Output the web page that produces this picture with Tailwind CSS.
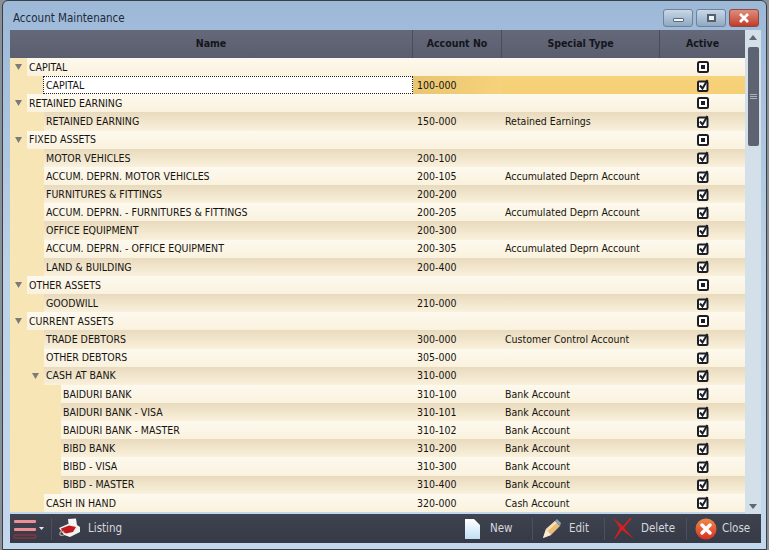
<!DOCTYPE html>
<html lang="en">
<head>
  <meta charset="UTF-8">
  <title>Account Maintenance</title>
  <script src="https://cdn.jsdelivr.net/npm/@tailwindcss/browser@4"></script>
</head>
<body class="w-[769px] h-[550px] overflow-hidden bg-[#8a8f96] font-['DejaVu_Sans_Condensed','DejaVu_Sans',sans-serif]">
  <div class="h-[550px] mx-[2px] pt-[1px] pb-[1px] flex flex-col rounded-t-[6px] border border-[#3a3f46] bg-gradient-to-b from-[#9db9d8] via-[#bcd2e8] to-[#c3d8ec]">
    <!-- title bar -->
    <div class="h-[28px] shrink-0 flex items-center justify-between pt-[4px] pl-[10px] pr-[7px]">
      <span class="text-[11.5px] text-[#1d2a3a] pt-[2px]">Account Maintenance</span>
      <div class="flex gap-[3px]">
        <button class="w-[30px] h-[18px] rounded-[3px] border border-[#6f8298] bg-gradient-to-b from-[#c8d8e8] to-[#8fa8c2] flex items-center justify-center">
          <span class="w-[11px] h-[4px] bg-[#f1f5f9] border border-[#5a6a7a] rounded-[1px] mt-[3px]"></span>
        </button>
        <button class="w-[30px] h-[18px] rounded-[3px] border border-[#6f8298] bg-gradient-to-b from-[#c8d8e8] to-[#8fa8c2] flex items-center justify-center">
          <span class="w-[9px] h-[8px] bg-[#f1f5f9] border-2 border-[#56606c]"></span>
        </button>
        <button class="w-[30px] h-[18px] rounded-[3px] border border-[#8a4a40] bg-gradient-to-b from-[#e08c7c] to-[#bf3a2a] flex items-center justify-center">
          <svg width="12" height="10" viewBox="0 0 12 10"><path d="M2 1l8 8M10 1l-8 8" stroke="#fff" stroke-width="2.6"/></svg>
        </button>
      </div>
    </div>

    <div class="ml-[7px] mr-[5px] flex-1 flex flex-col min-h-0">
      <div class="flex flex-1 min-h-0">
        <div class="w-[735px] shrink-0">
          <!-- header -->
          <div class="h-[28px] flex bg-gradient-to-b from-[#646878] to-[#5a5e6e] text-[10.5px] font-bold text-[#14161c]">
            <div class="w-[403px] flex items-center justify-center border-r border-[#494d5a]">Name</div>
            <div class="w-[89px] flex items-center justify-center border-r border-[#494d5a]">Account No</div>
            <div class="w-[158px] flex items-center justify-center border-r border-[#494d5a]">Special Type</div>
            <div class="flex-1 flex items-center justify-center">Active</div>
          </div>
          <div id="rows" class="bg-[#f8e5b6]"></div>
        </div>
        <!-- scrollbar -->
        <div class="w-[16px] bg-[#d3dfe9] flex flex-col items-center">
          <svg class="mt-[5px] shrink-0" width="8" height="5" viewBox="0 0 8 5"><path d="M4 0l4 5H0z" fill="#5e6672"/></svg>
          <div class="mt-[7px] w-[11px] h-[99px] rounded-[2px] bg-[#5e6372] flex flex-col items-center justify-center gap-[1px]">
            <span class="w-[7px] h-[1px] bg-[#aab0bc]"></span>
            <span class="w-[7px] h-[1px] bg-[#aab0bc]"></span>
            <span class="w-[7px] h-[1px] bg-[#aab0bc]"></span>
          </div>
          <svg class="mt-auto mb-[5px] shrink-0" width="8" height="5" viewBox="0 0 8 5"><path d="M4 5l4-5H0z" fill="#5e6672"/></svg>
        </div>
      </div>

      <!-- toolbar -->
      <div class="h-[29px] shrink-0 mb-[5px] bg-gradient-to-b from-[#3f4350] to-[#363a46] flex items-center text-[11.5px] text-[#d5d8de]">
        <div class="w-[42px] pl-[3px] flex items-center gap-[2px] border-r border-[#4d515e] h-[22px]">
          <svg width="24" height="20" viewBox="0 0 24 20">
            <rect x="1" y="1" width="22" height="3" rx="1" fill="#ef8d94"/>
            <rect x="1" y="9" width="22" height="3" rx="1" fill="#ef8d94"/>
            <rect x="1" y="16" width="22" height="3" rx="1" fill="none" stroke="#a8343c"/>
          </svg>
          <svg width="5" height="3" viewBox="0 0 5 3"><path d="M0 0h5L2.500 3z" fill="#e5e7eb"/></svg>
        </div>
        <div class="flex items-center ml-[6px] gap-[7px]">
          <svg width="23" height="22" viewBox="0 0 23 22">
            <path d="M10 1l8-.5 1 7-8 3z" fill="#f6f6f6"/>
            <path d="M1 10l9-4 9 1 3 2v5l-10 5-6-2z" fill="#f2f2f2"/>
            <path d="M3 10.500l8-3 7 1.500-3 5-7 1.500-4-2z" fill="#c21a1a"/>
            <path d="M6 17c-3 1-5 0-4-2s3-2 4-1" fill="none" stroke="#b9a0a0" stroke-width="1.200"/>
          </svg>
          <span>Listing</span>
        </div>
        <div class="ml-auto flex items-center h-[22px]">
          <div class="w-[73px] pl-[5px] flex items-center border-r border-[#4d515e] h-full">
            <span class="w-[25px]">
              <svg width="15" height="20" viewBox="0 0 15 20"><defs><linearGradient id="pg" x1="0" y1="0" x2="0" y2="1"><stop offset="0" stop-color="#fff"/><stop offset="1" stop-color="#bfe0f4"/></linearGradient></defs><path d="M0 0h9l6 6v14H0z" fill="url(#pg)"/></svg>
            </span>
            <span>New</span>
          </div>
          <div class="w-[72px] pl-[8px] flex items-center border-r border-[#4d515e] h-full">
            <span class="w-[28px]">
              <svg width="20" height="20" viewBox="0 0 20 20">
                <path d="M5 10L14 2l5 5-9 9-8 3z" fill="#e8bd78"/>
                <path d="M5 10l5 6-8 3z" fill="#f7ecd8"/>
                <path d="M5 10l9-8 2 2-9 8z" fill="#f6dfae"/>
                <path d="M14 2l2-2 4 4-1 3z" fill="#8aa0b8"/>
              </svg>
            </span>
            <span>Edit</span>
          </div>
          <div class="w-[82px] pl-[7px] flex items-center border-r border-[#4d515e] h-full">
            <span class="w-[29px]">
              <svg width="22" height="21" viewBox="0 0 22 21"><path d="M1 0l10 8 7-8h2l-8 10 10 11-12-9-7 9h-1l6-11z" fill="#d81e1e"/></svg>
            </span>
            <span>Delete</span>
          </div>
          <div class="w-[74px] pl-[8px] flex items-center h-full">
            <span class="w-[27px]">
              <svg width="22" height="22" viewBox="0 0 22 22">
                <defs><linearGradient id="cg" x1="0" y1="0" x2="0" y2="1"><stop offset="0" stop-color="#f08a4a"/><stop offset="1" stop-color="#d8301e"/></linearGradient></defs>
                <circle cx="11" cy="11" r="10.500" fill="url(#cg)"/>
                <path d="M7 7l8 8M15 7l-8 8" stroke="#fff" stroke-width="3.500" stroke-linecap="round"/>
              </svg>
            </span>
            <span>Close</span>
          </div>
        </div>
      </div>
    </div>
  </div>

  <script>
    // level, name, account no, special type, expandable
    const accounts = [
      [0, 'CAPITAL', '', '', true],
      [1, 'CAPITAL', '100-000', ''],
      [0, 'RETAINED EARNING', '', '', true],
      [1, 'RETAINED EARNING', '150-000', 'Retained Earnings'],
      [0, 'FIXED ASSETS', '', '', true],
      [1, 'MOTOR VEHICLES', '200-100', ''],
      [1, 'ACCUM. DEPRN. MOTOR VEHICLES', '200-105', 'Accumulated Deprn Account'],
      [1, 'FURNITURES & FITTINGS', '200-200', ''],
      [1, 'ACCUM. DEPRN. - FURNITURES & FITTINGS', '200-205', 'Accumulated Deprn Account'],
      [1, 'OFFICE EQUIPMENT', '200-300', ''],
      [1, 'ACCUM. DEPRN. - OFFICE EQUIPMENT', '200-305', 'Accumulated Deprn Account'],
      [1, 'LAND & BUILDING', '200-400', ''],
      [0, 'OTHER ASSETS', '', '', true],
      [1, 'GOODWILL', '210-000', ''],
      [0, 'CURRENT ASSETS', '', '', true],
      [1, 'TRADE DEBTORS', '300-000', 'Customer Control Account'],
      [1, 'OTHER DEBTORS', '305-000', ''],
      [1, 'CASH AT BANK', '310-000', '', true],
      [2, 'BAIDURI BANK', '310-100', 'Bank Account'],
      [2, 'BAIDURI BANK - VISA', '310-101', 'Bank Account'],
      [2, 'BAIDURI BANK - MASTER', '310-102', 'Bank Account'],
      [2, 'BIBD BANK', '310-200', 'Bank Account'],
      [2, 'BIBD - VISA', '310-300', 'Bank Account'],
      [2, 'BIBD - MASTER', '310-400', 'Bank Account'],
      [1, 'CASH IN HAND', '320-000', 'Cash Account'],
    ];
    const indent = ['w-[17px]', 'w-[34px]', 'w-[51px]'];
    const light = 'bg-gradient-to-b from-[#fdf9ee] to-[#faf2de]';
    const tan = 'bg-gradient-to-b from-[#e8dabd] to-[#faf1dc]';
    const selected = 'bg-gradient-to-b from-[#f6d27a] to-[#f5cf74]';
    const tick = '<svg width="12" height="13" viewBox="0 0 12 13"><rect x="1" y="2.500" width="9.500" height="9.500" rx="1" fill="#fff" stroke="#1c1e24" stroke-width="2"/><path d="M3 6.500l2.500 3L10.500 1" fill="none" stroke="#1c1e24" stroke-width="2"/></svg>';
    const mixed = '<svg width="12" height="12" viewBox="0 0 12 12"><rect x="1" y="1" width="10" height="10" rx="1.500" fill="#fff" stroke="#1c1e24" stroke-width="2"/><rect x="4" y="4" width="4" height="4" fill="#1c1e24"/></svg>';
    const arrow = '<svg width="7" height="6" viewBox="0 0 7 6"><path d="M0 0h7L3.500 6z" fill="#7b7b78"/></svg>';

    document.getElementById('rows').innerHTML = accounts.map(([level, name, no, type, open], i) => {
      const isSel = i === 1;
      const bg = i % 2 === 0 || i === 1 ? light : tan;
      const nameCell = isSel
        ? 'bg-white border border-dotted border-[#222] -ml-[1px]'
        : bg;
      const rest = isSel ? selected : bg;
      const noCell = isSel ? 'bg-gradient-to-r from-[#e9c571] to-[#f6d27a]' : bg;
      return `
        <div class="h-[18.17px] flex text-[10.5px] leading-none text-[#16140f]">
          <div class="${indent[level]} shrink-0 flex items-center justify-end pr-[5px]">${open ? arrow : ''}</div>
          <div class="flex-1 flex items-center pl-[2px] ${nameCell}">${name}</div>
          <div class="w-[89px] shrink-0 flex items-center pl-[4px] ${noCell}">${no}</div>
          <div class="w-[158px] shrink-0 flex items-center pl-[3px] ${rest}">${type}</div>
          <div class="w-[85px] shrink-0 flex items-center justify-center ${rest}">${open && level === 0 ? mixed : tick}</div>
        </div>`;
    }).join('');
  </script>
</body>
</html>
